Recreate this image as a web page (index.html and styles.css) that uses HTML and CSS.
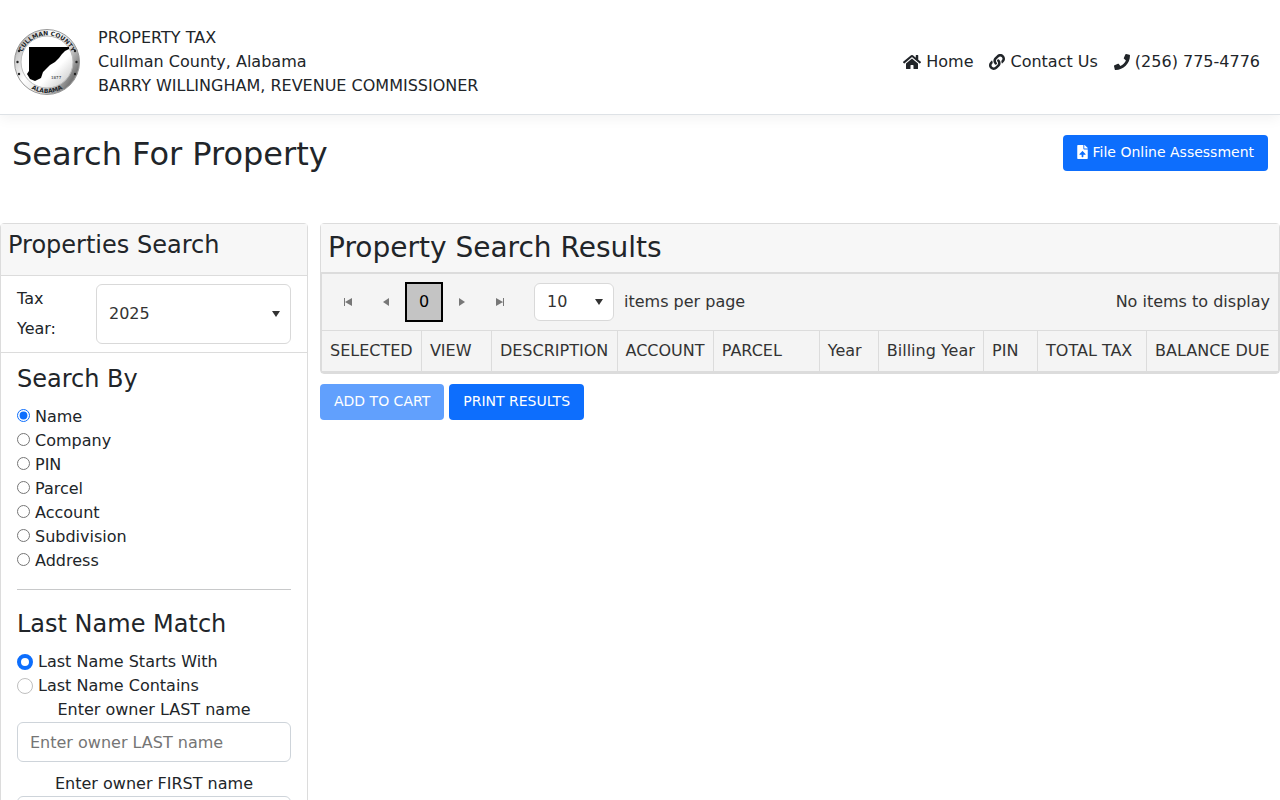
FILE: index.html
```html
<!DOCTYPE html>
<html lang="en">
<head>
    <meta charset="UTF-8">
    <meta name="viewport" content="width=device-width, initial-scale=1">
    <title>Property Tax - Cullman County, Alabama</title>
    <link rel="stylesheet" href="styles.css">
</head>
<body>
    <header class="header">
        <svg class="seal" viewBox="0 0 66 66" role="img" aria-label="Cullman County seal">
            <defs>
                <linearGradient id="sealRing" x1="0" y1="0.2" x2="1" y2="0.8">
                    <stop offset="0" stop-color="#777"/>
                    <stop offset="0.12" stop-color="#ccc"/>
                    <stop offset="0.35" stop-color="#fff"/>
                    <stop offset="0.65" stop-color="#ddd"/>
                    <stop offset="0.9" stop-color="#777"/>
                    <stop offset="1" stop-color="#aaa"/>
                </linearGradient>
                <linearGradient id="sealFace" x1="0.3" y1="0.3" x2="1" y2="1">
                    <stop offset="0.5" stop-color="#fff"/>
                    <stop offset="1" stop-color="#bbb"/>
                </linearGradient>
                <path id="sealTop" d="M6.5 33a26.5 26.5 0 0 1 53 0"/>
                <path id="sealBottom" d="M2 33a31 31 0 0 0 62 0"/>
            </defs>
            <circle cx="33" cy="33" r="32.5" fill="url(#sealRing)" stroke="#999"/>
            <circle cx="33" cy="33" r="26" fill="url(#sealFace)" stroke="#bbb"/>
            <path fill="#000" d="M15 18h40v2l-4 2-3 3-3 4-4 4-5 3-4 4-3 3-2 6-6 3-5-2-3-5 2-3z"/>
            <text class="seal-text"><textPath href="#sealTop" startOffset="50%">CULLMAN COUNTY</textPath></text>
            <text class="seal-text"><textPath href="#sealBottom" startOffset="50%">ALABAMA</textPath></text>
            <text class="seal-year" x="37" y="50">1877</text>
            <g fill="#222">
                <circle cx="5" cy="22" r="1.2"/>
                <circle cx="3.5" cy="33" r="1.2"/>
                <circle cx="5" cy="45" r="1.2"/>
                <circle cx="61" cy="22" r="1.2"/>
                <circle cx="62.5" cy="33" r="1.2"/>
                <circle cx="61" cy="45" r="1.2"/>
            </g>
        </svg>
        <div class="header-title">
            <div>PROPERTY TAX</div>
            <div>Cullman County, Alabama</div>
            <div>BARRY WILLINGHAM, REVENUE COMMISSIONER</div>
        </div>
        <nav class="header-links">
            <a href="#">
                <svg width="18" height="16" viewBox="0 0 576 512"><path d="M280.37 148.26L96 300.11V464a16 16 0 0 0 16 16l112.06-.29a16 16 0 0 0 15.92-16V368a16 16 0 0 1 16-16h64a16 16 0 0 1 16 16v95.64a16 16 0 0 0 16 16.05L464 480a16 16 0 0 0 16-16V300L295.67 148.26a12.19 12.19 0 0 0-15.3 0zM571.6 251.47L488 182.56V44.05a12 12 0 0 0-12-12h-56a12 12 0 0 0-12 12v72.61L318.47 43a48 48 0 0 0-61 0L4.34 251.47a12 12 0 0 0-1.6 16.9l25.5 31A12 12 0 0 0 45.15 301l235.22-193.74a12.19 12.19 0 0 1 15.3 0L530.9 301a12 12 0 0 0 16.9-1.6l25.5-31a12 12 0 0 0-1.7-16.93z"/></svg>
                Home
            </a>
            <a href="#">
                <svg width="16" height="16" viewBox="0 0 512 512"><path d="M326.612 185.391c59.747 59.809 58.927 155.698.36 214.59-.11.12-.24.25-.36.37l-67.2 67.2c-59.27 59.27-155.699 59.262-214.96 0-59.27-59.26-59.27-155.7 0-214.96l37.106-37.106c9.84-9.84 26.786-3.3 27.294 10.606.648 17.722 3.826 35.527 9.69 52.721 1.986 5.822.567 12.262-3.783 16.612l-13.087 13.087c-28.026 28.026-28.905 73.66-1.155 101.96 28.024 28.579 74.086 28.749 102.325.51l67.2-67.19c28.191-28.191 28.073-73.757 0-101.83-3.701-3.694-7.429-6.564-10.341-8.569a16.037 16.037 0 0 1-6.947-12.606c-.396-10.567 3.348-21.456 11.698-29.806l21.054-21.055c5.521-5.521 14.182-6.199 20.584-1.731a152.482 152.482 0 0 1 20.522 17.197zM467.547 44.449c-59.261-59.262-155.69-59.27-214.96 0l-67.2 67.2c-.12.12-.25.25-.36.37-58.566 58.892-59.387 154.781.36 214.59a152.454 152.454 0 0 0 20.521 17.196c6.402 4.468 15.064 3.789 20.584-1.731l21.054-21.055c8.35-8.35 12.094-19.239 11.698-29.806a16.037 16.037 0 0 0-6.947-12.606c-2.912-2.005-6.64-4.875-10.341-8.569-28.073-28.073-28.191-73.639 0-101.83l67.2-67.19c28.239-28.239 74.3-28.069 102.325.51 27.75 28.3 26.872 73.934-1.155 101.96l-13.087 13.087c-4.35 4.35-5.769 10.79-3.783 16.612 5.864 17.194 9.042 34.999 9.69 52.721.509 13.906 17.454 20.446 27.294 10.606l37.106-37.106c59.271-59.259 59.271-155.699.001-214.959z"/></svg>
                Contact Us
            </a>
            <a href="tel:2567754776">
                <svg width="16" height="16" viewBox="0 0 512 512"><path d="M493.4 24.6l-104-24c-11.3-2.6-22.9 3.3-27.5 13.9l-48 112c-4.2 9.8-1.4 21.3 6.9 28l60.6 49.6c-36 76.7-98.9 140.5-177.2 177.2l-49.6-60.6c-6.8-8.3-18.2-11.1-28-6.9l-112 48C3.9 366.5-2 378.1.6 389.4l24 104C27.1 504.2 36.7 512 48 512c256.1 0 464-207.5 464-464 0-11.2-7.7-20.9-18.6-23.4z"/></svg>
                (256) 775-4776
            </a>
        </nav>
    </header>

    <div class="page-title">
        <h1>Search For Property</h1>
        <button type="button" class="btn">
            <svg width="11" height="14" viewBox="0 0 384 512"><path d="M224 136V0H24C10.7 0 0 10.7 0 24v464c0 13.3 10.7 24 24 24h336c13.3 0 24-10.7 24-24V160H248c-13.200 0-24-10.800-24-24zm65.180 216H224v80c0 8.840-7.160 16-16 16h-32c-8.840 0-16-7.160-16-16v-80H94.820c-14.280 0-21.410-17.290-11.270-27.360l96.420-95.700c6.650-6.610 17.390-6.610 24.040 0l96.420 95.700c10.150 10.070 3.030 27.360-11.250 27.360zM377 105L279.100 7c-4.500-4.500-10.600-7-17-7H256v128h128v-6.100c0-6.300-2.500-12.400-7-16.900z"/></svg>
            File Online Assessment
        </button>
    </div>

    <main class="content">
        <aside class="card search-card">
            <h2 class="card-title">Properties Search</h2>

            <div class="tax-year">
                <label for="taxYear">Tax Year:</label>
                <select id="taxYear" class="select">
                    <option>2025</option>
                    <option>2024</option>
                    <option>2023</option>
                </select>
            </div>

            <form class="search-form">
                <h2>Search By</h2>
                <div class="options search-options">
                    <label><input type="radio" name="searchBy" checked> Name</label>
                    <label><input type="radio" name="searchBy"> Company</label>
                    <label><input type="radio" name="searchBy"> PIN</label>
                    <label><input type="radio" name="searchBy"> Parcel</label>
                    <label><input type="radio" name="searchBy"> Account</label>
                    <label><input type="radio" name="searchBy"> Subdivision</label>
                    <label><input type="radio" name="searchBy"> Address</label>
                </div>

                <hr>

                <h2>Last Name Match</h2>
                <div class="options match-options">
                    <label><input type="radio" name="lastNameMatch" checked> Last Name Starts With</label>
                    <label><input type="radio" name="lastNameMatch"> Last Name Contains</label>
                </div>

                <div class="field">
                    <label for="lastName">Enter owner LAST name</label>
                    <input type="text" id="lastName" placeholder="Enter owner LAST name">
                </div>
                <div class="field">
                    <label for="firstName">Enter owner FIRST name</label>
                    <input type="text" id="firstName" placeholder="Enter owner FIRST name">
                </div>
            </form>
        </aside>

        <section class="results">
            <div class="card">
                <h2 class="card-title results-title">Property Search Results</h2>
                <div class="grid">
                    <div class="pager">
                        <button type="button" class="pager-btn" aria-label="First page" disabled>
                            <svg width="16" height="16" viewBox="0 0 16 16"><path d="M4 4h1v8H4zM12 4v8L5 8z"/></svg>
                        </button>
                        <button type="button" class="pager-btn" aria-label="Previous page" disabled>
                            <svg width="16" height="16" viewBox="0 0 16 16"><path d="M11 4v8L5 8z"/></svg>
                        </button>
                        <button type="button" class="pager-btn current">0</button>
                        <button type="button" class="pager-btn" aria-label="Next page" disabled>
                            <svg width="16" height="16" viewBox="0 0 16 16"><path d="M5 4v8l6-4z"/></svg>
                        </button>
                        <button type="button" class="pager-btn" aria-label="Last page" disabled>
                            <svg width="16" height="16" viewBox="0 0 16 16"><path d="M4 4v8l7-4zM11 4h1v8h-1z"/></svg>
                        </button>
                        <select id="pageSize" class="select page-size">
                            <option>10</option>
                            <option>20</option>
                            <option>50</option>
                        </select>
                        <label for="pageSize">items per page</label>
                        <span class="pager-info">No items to display</span>
                    </div>
                    <table>
                        <thead>
                            <tr>
                                <th>SELECTED</th>
                                <th class="col-view">VIEW</th>
                                <th>DESCRIPTION</th>
                                <th>ACCOUNT</th>
                                <th class="col-parcel">PARCEL</th>
                                <th class="col-year">Year</th>
                                <th>Billing Year</th>
                                <th class="col-pin">PIN</th>
                                <th class="col-total">TOTAL TAX</th>
                                <th>BALANCE DUE</th>
                            </tr>
                        </thead>
                    </table>
                </div>
            </div>
            <div class="actions">
                <button type="button" class="btn" disabled>ADD TO CART</button>
                <button type="button" class="btn">PRINT RESULTS</button>
            </div>
        </section>
    </main>
</body>
</html>
```
FILE: styles.css
```css
* {
    box-sizing: border-box;
}
body {
    font-family: "DejaVu Sans", sans-serif;
    font-size: 16px;
    line-height: 24px;
    margin: 0;
    color: #212529;
    background: #fff;
}
h1, h2 {
    font-weight: 400;
    margin: 0;
}
h1 {
    font-size: 32px;
    line-height: 38px;
}
h2 {
    font-size: 24px;
    line-height: 29px;
}
button, input, select {
    font: inherit;
    color: inherit;
}
svg {
    fill: currentColor;
}

/* header */
.header {
    display: flex;
    align-items: center;
    padding: 26px 20px 16px 14px;
    border-bottom: 1px solid #dee2e6;
    box-shadow: 0 4px 12px rgba(0, 0, 0, 0.05);
}
.seal {
    width: 66px;
    height: 66px;
    margin-right: 18px;
}
.seal-text {
    font-size: 6px;
    font-weight: bold;
    text-anchor: middle;
}
.seal-year {
    font-size: 4px;
}
.header-links {
    display: flex;
    gap: 16px;
    margin-left: auto;
}
.header-links a {
    display: flex;
    align-items: center;
    gap: 5px;
    color: inherit;
    text-decoration: none;
}

.page-title {
    display: flex;
    justify-content: space-between;
    align-items: flex-start;
    padding: 20px 12px 50px;
}
.btn {
    display: inline-flex;
    align-items: center;
    gap: 5px;
    height: 36px;
    padding: 0 14px 2px;
    font-size: 14px;
    color: #fff;
    background: #0d6efd;
    border: 0;
    border-radius: 4px;
}
.btn:disabled {
    opacity: 0.65;
}

.content {
    display: grid;
    grid-template-columns: 1fr 3fr;
    align-items: start;
}
.card {
    border: 1px solid #dcdcdc;
    border-radius: 4px;
}
.card-title {
    padding: 7px 7px 15px;
    background: #f7f7f7;
    border-bottom: 1px solid #dcdcdc;
}

/* search panel */
.search-card {
    margin-right: 12px;
}
.tax-year {
    display: flex;
    gap: 12px;
    padding: 8px 16px;
    border-bottom: 1px solid #dcdcdc;
}
.tax-year label {
    width: 67px;
    line-height: 30px;
}
.select {
    flex: 1;
    min-width: 0;
    padding: 0 12px;
    appearance: none;
    color: #333;
    border: 1px solid #d9d9d9;
    border-radius: 6px;
    background: #fff url("data:image/svg+xml,%3Csvg xmlns='http://www.w3.org/2000/svg' width='8' height='6'%3E%3Cpath d='M0 0h8L4 6z' fill='%23333'/%3E%3C/svg%3E") no-repeat right 10px center;
}
.search-form {
    padding: 12px 16px 16px;
}
.search-form h2 {
    margin-bottom: 11px;
}
.search-form hr {
    margin: 16px 0 20px;
    border: 0;
    border-top: 1px solid #c8c9ca;
}
.options label {
    display: flex;
    align-items: center;
    gap: 5px;
}
.search-options input {
    width: 13px;
    height: 13px;
    margin: 0 0 3px;
    accent-color: #0d6efd;
}
.match-options input {
    width: 16px;
    height: 16px;
    margin: 0;
    appearance: none;
    border: 1px solid #bfbfbf;
    border-radius: 50%;
}
.match-options input:checked {
    border: 4px solid #0d6efd;
}
.field {
    margin-bottom: 10px;
    text-align: center;
}
.field label {
    display: block;
}
.field input {
    display: block;
    width: 100%;
    height: 40px;
    padding: 0 12px;
    border: 1px solid #ced4da;
    border-radius: 6px;
}
.field input::placeholder {
    color: #757575;
}

/* results */
.results-title {
    padding: 7px;
    font-size: 28px;
    line-height: 34px;
}
.grid {
    color: #333;
    background: #f4f4f4;
    border: 1px solid #dcdcdc;
    border-bottom-width: 2px;
}
.pager {
    display: flex;
    align-items: center;
    padding: 8px 8px 8px 7px;
}
.pager-btn {
    display: flex;
    align-items: center;
    justify-content: center;
    width: 38px;
    height: 40px;
    padding: 0;
    color: #777;
    background: none;
    border: 0;
}
.pager-btn.current {
    color: #000;
    background: #c4c4c4;
    border: 2px solid #000;
}
.page-size {
    flex: none;
    width: 80px;
    height: 38px;
    margin: 0 10px 0 15px;
}
.pager-info {
    margin-left: auto;
}
table {
    width: 100%;
    border-collapse: separate;
    border-spacing: 0;
}
th {
    padding: 8px;
    font-weight: 400;
    text-align: left;
    white-space: nowrap;
    border-top: 1px solid #dcdcdc;
    border-left: 1px solid #dcdcdc;
}
th:first-child {
    border-left: 0;
}
.col-view {
    width: 70px;
}
.col-parcel {
    width: 106px;
}
.col-year {
    width: 59px;
}
.col-pin {
    width: 54px;
}
.col-total {
    width: 109px;
}
.actions {
    display: flex;
    gap: 5px;
    margin-top: 10px;
}
```
